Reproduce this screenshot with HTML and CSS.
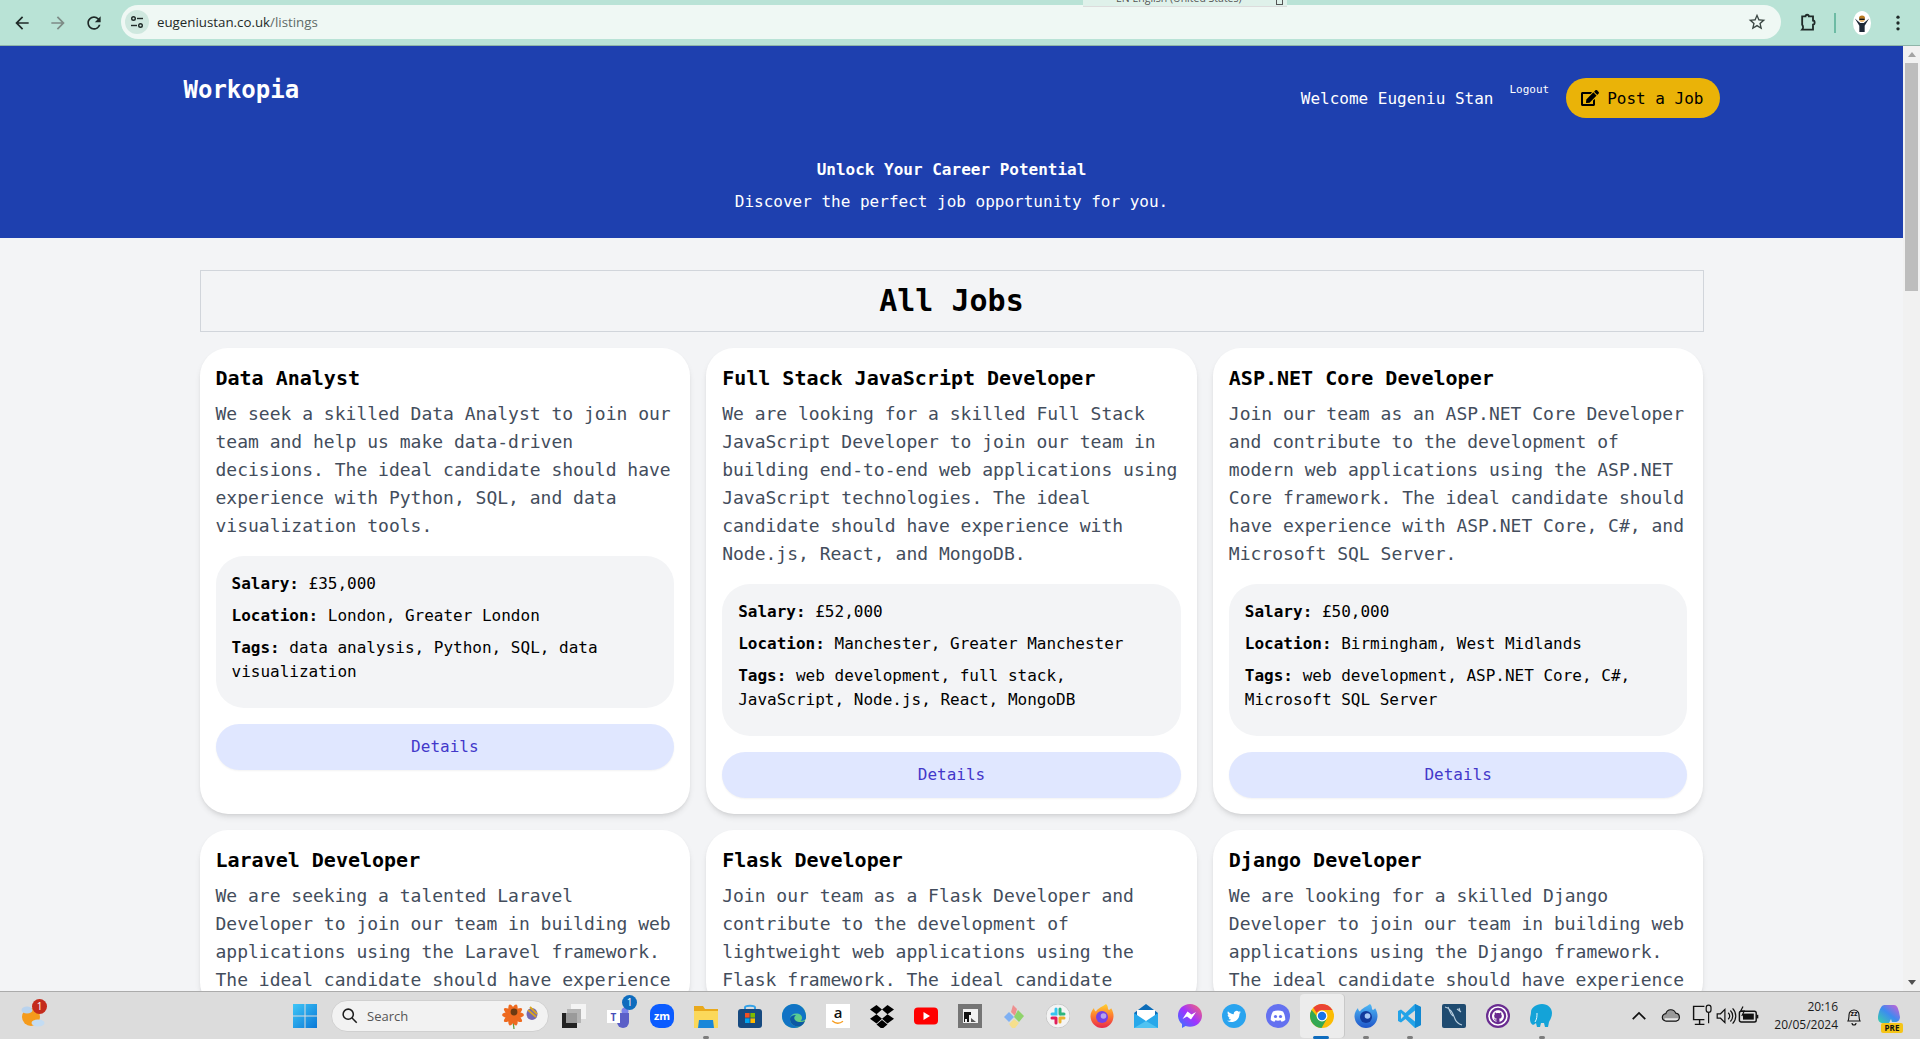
FILE: index.html
```html
<!DOCTYPE html>
<html lang="en">
<head>
    <meta charset="UTF-8">
    <meta name="viewport" content="width=device-width, initial-scale=1.0">
    <title>Workopia</title>
    <link rel="stylesheet" href="styles.css">
</head>
<body>
    <!-- browser toolbar -->
    <div class="toolbar">
        <svg class="tool-btn" viewBox="0 0 24 24"><path fill="#1f2a28" d="M20 11H7.83l5.59-5.59L12 4l-8 8 8 8 1.41-1.41L7.83 13H20v-2z"/></svg>
        <svg class="tool-btn" viewBox="0 0 24 24"><path fill="#7d8b86" d="M4 11h12.17l-5.59-5.59L12 4l8 8-8 8-1.41-1.41L16.17 13H4v-2z"/></svg>
        <svg class="tool-btn" viewBox="0 0 24 24"><path fill="#1f2a28" d="M17.65 6.35A7.958 7.958 0 0012 4c-4.42 0-7.99 3.58-7.99 8s3.57 8 7.99 8c3.73 0 6.84-2.55 7.73-6h-2.08A5.99 5.99 0 0112 18c-3.31 0-6-2.69-6-6s2.69-6 6-6c1.66 0 3.14.69 4.22 1.78L13 11h7V4l-2.35 2.35z"/></svg>
        <div class="omnibox">
            <span class="site-info">
                <svg viewBox="0 0 16 16" width="16" height="16" fill="none" stroke="#1f2a28" stroke-width="1.4"><circle cx="4.5" cy="4.5" r="1.8"/><path d="M8 4.5h6"/><circle cx="11.5" cy="11.5" r="1.8"/><path d="M2 11.5h6"/></svg>
            </span>
            <span class="url">eugeniustan.co.uk<span class="url-path">/listings</span></span>
            <svg class="star" viewBox="0 0 24 24"><path fill="#3a4643" d="M22 9.24l-7.19-.62L12 2 9.19 8.63 2 9.24l5.46 4.73L5.82 21 12 17.27 18.18 21l-1.63-7.03L22 9.24zM12 15.4l-3.76 2.27 1-4.28-3.32-2.88 4.38-.38L12 6.1l1.71 4.04 4.38.38-3.32 2.88 1 4.28L12 15.4z"/></svg>
        </div>
        <svg class="tool-end ext" viewBox="0 0 24 24"><path fill="none" stroke="#1f2a28" stroke-width="2.2" d="M5 4h4c0-2.6 4-2.6 4 0h5v5c2.6 0 2.6 5 0 5v6H5c1.4-1.6 1.4-4.4 0-6z"/></svg>
        <span class="tool-divider"></span>
        <span class="avatar">
            <svg viewBox="0 0 18 22" width="16" height="20"><path d="M1 6l6 5h4l6-5-5 8v7H6v-7z" fill="#1f2937"/><circle cx="9" cy="6.5" r="3.4" fill="#e9b872"/><path d="M5.6 6a3.4 3.4 0 016.8 0z" fill="#b8791f"/><rect x="6" y="6" width="6" height="1.6" fill="#111"/></svg>
        </span>
        <svg class="tool-end menu" viewBox="0 0 24 24"><circle cx="12" cy="5" r="2" fill="#1f2a28"/><circle cx="12" cy="12" r="2" fill="#1f2a28"/><circle cx="12" cy="19" r="2" fill="#1f2a28"/></svg>
    </div>
    <div class="lang-tip"><span>EN English (United States)</span><i></i></div>

    <div class="viewport">
        <div class="page">
            <header class="site-header">
                <nav class="nav">
                    <a class="logo">Workopia</a>
                    <div class="nav-right">
                        <span class="welcome">Welcome Eugeniu Stan</span>
                        <a class="logout">Logout</a>
                        <a class="post-btn">
                            <svg viewBox="0 0 576 512" width="18" height="16"><path fill="#000" d="M402.6 83.2l90.2 90.2c3.8 3.8 3.8 10 0 13.8L274.4 405.6l-92.8 10.3c-12.4 1.4-22.9-9.1-21.5-21.5l10.3-92.8L388.8 83.2c3.8-3.8 10-3.8 13.8 0zm162-22.9l-48.8-48.8c-15.2-15.2-39.9-15.2-55.2 0l-35.4 35.4c-3.8 3.8-3.8 10 0 13.8l90.2 90.2c3.8 3.8 10 3.8 13.8 0l35.4-35.4c15.2-15.3 15.2-40 0-55.2zM384 346.2V448H64V128h229.8c3.2 0 6.2-1.3 8.5-3.5l40-40c7.6-7.6 2.2-20.5-8.5-20.5H48C21.5 64 0 85.5 0 112v352c0 26.5 21.5 48 48 48h352c26.5 0 48-21.5 48-48V306.2c0-10.7-12.9-16-20.5-8.5l-40 40c-2.2 2.3-3.5 5.3-3.5 8.5z"/></svg>
                            Post a Job
                        </a>
                    </div>
                </nav>
                <div class="hero">
                    <h2>Unlock Your Career Potential</h2>
                    <p>Discover the perfect job opportunity for you.</p>
                </div>
            </header>

            <main class="listings">
                <div class="title-box"><h1>All Jobs</h1></div>
                <div class="jobs">
                    <div class="card">
                        <h3>Data Analyst</h3>
                        <p>We seek a skilled Data Analyst to join our team and help us make data-driven decisions. The ideal candidate should have experience with Python, SQL, and data visualization tools.</p>
                        <ul class="facts">
                            <li><b>Salary:</b> £35,000</li>
                            <li><b>Location:</b> London, Greater London</li>
                            <li><b>Tags:</b> data analysis, Python, SQL, data visualization</li>
                        </ul>
                        <a class="details">Details</a>
                    </div>
                    <div class="card">
                        <h3>Full Stack JavaScript Developer</h3>
                        <p>We are looking for a skilled Full Stack JavaScript Developer to join our team in building end-to-end web applications using JavaScript technologies. The ideal candidate should have experience with Node.js, React, and MongoDB.</p>
                        <ul class="facts">
                            <li><b>Salary:</b> £52,000</li>
                            <li><b>Location:</b> Manchester, Greater Manchester</li>
                            <li><b>Tags:</b> web development, full stack, JavaScript, Node.js, React, MongoDB</li>
                        </ul>
                        <a class="details">Details</a>
                    </div>
                    <div class="card">
                        <h3>ASP.NET Core Developer</h3>
                        <p>Join our team as an ASP.NET Core Developer and contribute to the development of modern web applications using the ASP.NET Core framework. The ideal candidate should have experience with ASP.NET Core, C#, and Microsoft SQL Server.</p>
                        <ul class="facts">
                            <li><b>Salary:</b> £50,000</li>
                            <li><b>Location:</b> Birmingham, West Midlands</li>
                            <li><b>Tags:</b> web development, ASP.NET Core, C#, Microsoft SQL Server</li>
                        </ul>
                        <a class="details">Details</a>
                    </div>
                    <div class="card">
                        <h3>Laravel Developer</h3>
                        <p>We are seeking a talented Laravel Developer to join our team in building web applications using the Laravel framework. The ideal candidate should have experience</p>
                    </div>
                    <div class="card">
                        <h3>Flask Developer</h3>
                        <p>Join our team as a Flask Developer and contribute to the development of lightweight web applications using the Flask framework. The ideal candidate</p>
                    </div>
                    <div class="card">
                        <h3>Django Developer</h3>
                        <p>We are looking for a skilled Django Developer to join our team in building web applications using the Django framework. The ideal candidate should have experience</p>
                    </div>
                </div>
            </main>
        </div>
        <div class="scrollbar">
            <span class="arrow-up"></span>
            <span class="thumb"></span>
            <span class="arrow-down"></span>
        </div>
    </div>

    <!-- windows taskbar -->
    <div class="taskbar">
        <div class="weather">
            <svg viewBox="0 0 24 26" width="24" height="26"><circle cx="10" cy="14" r="9" fill="#f59b1c"/><ellipse cx="6" cy="7" rx="5.5" ry="3.6" fill="#b9d3ee"/><ellipse cx="17" cy="20" rx="6.5" ry="3.4" fill="#c3dcf3"/></svg>
            <span class="weather-badge">1</span>
        </div>
        <div class="slot">
            <svg viewBox="0 0 24 24" width="24" height="24"><defs><linearGradient id="winG" x1="0" y1="0" x2="1" y2="1"><stop offset="0" stop-color="#3fc6f7"/><stop offset="1" stop-color="#0a78d7"/></linearGradient></defs><path fill="url(#winG)" d="M0 0h11.5v11.5H0zM12.5 0H24v11.5H12.5zM0 12.5h11.5V24H0zM12.5 12.5H24V24H12.5z"/></svg>
        </div>
        <div class="search">
            <svg viewBox="0 0 20 20" width="17" height="17" fill="none" stroke="#1c1c1c" stroke-width="1.8"><circle cx="8.5" cy="8.5" r="6"/><path d="M13 13l5.5 5.5"/></svg>
            <span>Search</span>
            <svg class="search-art" viewBox="0 0 40 26" width="40" height="26"><path d="M12 18l1 8" stroke="#5d9c3a" stroke-width="1.2"/><g fill="#ee6a1f"><ellipse cx="12" cy="12" rx="11" ry="3.4"/><ellipse cx="12" cy="12" rx="11" ry="3.4" transform="rotate(36 12 12)"/><ellipse cx="12" cy="12" rx="11" ry="3.4" transform="rotate(72 12 12)"/><ellipse cx="12" cy="12" rx="11" ry="3.4" transform="rotate(108 12 12)"/><ellipse cx="12" cy="12" rx="11" ry="3.4" transform="rotate(144 12 12)"/></g><circle cx="13" cy="9" r="3.4" fill="#6b3a12"/><ellipse cx="31" cy="11" rx="5.500" ry="6" fill="#7467b0"/><path d="M27 7l8 7M29 4l7 7" stroke="#d9a520" stroke-width="1.800"/></svg>
        </div>
        <div class="apps">
            <div class="slot"><svg viewBox="0 0 24 24" width="24" height="24"><rect x="9" y="0" width="15" height="15" fill="#f4f4f4"/><rect x="5" y="5" width="14" height="14" fill="#b4b4b4"/><rect y="9" width="15" height="15" fill="#222"/><rect x="4" y="9" width="11" height="10" fill="#9a9a9a"/></svg></div>
            <div class="slot">
                <svg viewBox="0 0 24 24" width="24" height="24"><circle cx="19" cy="7" r="3.5" fill="#7b83eb"/><path d="M11 9h12v9a6 6 0 01-12 0z" fill="#5b5fc7"/><rect x="1" y="6" width="13" height="13" fill="#fff"/><text x="7.5" y="16.5" class="teams-t">T</text></svg>
                <span class="teams-badge">1</span>
            </div>
            <div class="slot"><span class="zoom-ico">zm</span></div>
            <div class="slot running">
                <svg viewBox="0 0 24 24" width="24" height="24"><path d="M0 2h9l2 3h13v19H0z" fill="#e9a91c"/><path d="M0 7h24v17H0z" fill="#fbd85a"/><path d="M5 16h14l1 8H4z" fill="#1a87d9"/></svg>
            </div>
            <div class="slot"><svg viewBox="0 0 24 24" width="24" height="24"><path d="M7 6V3.5C7 1 17 1 17 3.5V6" fill="none" stroke="#35a2e8" stroke-width="2"/><rect y="5" width="24" height="19" rx="3" fill="#174a80"/><rect x="7" y="9" width="4.6" height="4.6" fill="#f25022"/><rect x="12.4" y="9" width="4.6" height="4.6" fill="#7fba00"/><rect x="7" y="14.4" width="4.6" height="4.6" fill="#00a4ef"/><rect x="12.4" y="14.4" width="4.6" height="4.6" fill="#ffb900"/></svg></div>
            <div class="slot"><svg viewBox="0 0 24 24" width="24" height="24"><defs><linearGradient id="edgeG" x1="0" y1="0" x2="1" y2="1"><stop offset="0" stop-color="#34c6d3"/><stop offset="1" stop-color="#7ad25c"/></linearGradient></defs><circle cx="12" cy="12" r="12" fill="url(#edgeG)"/><path d="M12 0C5 0 0 5.500 0 12c0 7 5.500 12 12 12 3 0 5-.7 7-2-5 1.500-11-1-11-7 0-3 2.500-5.500 6-5.500 4 0 6 2 6 4.500 0 1-.5 2-1.500 2.500 3 1 6.500-.500 5.500-5C23 4 18 0 12 0z" fill="#1173c5"/><path d="M8 15c0 6 6 8.500 11 7 1.800-1.100 3.200-2.800 4-5-3 1.500-7 1.500-9.500-.5-2-1.500-1.500-4 .5-5.500-3.500 0-6 1.500-6 4z" fill="#0c59a4"/></svg></div>
            <div class="slot"><span class="amazon-ico"><span>a</span><svg viewBox="0 0 16 6" width="14" height="5"><path d="M1 1c4 3.500 9 3.500 13 .5" fill="none" stroke="#f79c1d" stroke-width="1.6"/></svg></span></div>
            <div class="slot"><svg viewBox="0 0 24 24" width="24" height="24"><path d="M6.500 1L0 5.600l6.500 4.600L12 5.600zM17.500 1L12 5.600l5.500 4.600L24 5.600zM0 14.800l6.500 4.600 5.500-4.600-5.500-4.600zM17.500 10.200L12 14.800l5.500 4.600 6.500-4.600zM6.500 20.600L12 25l5.500-4.400L12 16z" fill="#000"/></svg></div>
            <div class="slot"><svg viewBox="0 0 24 24" width="24" height="24"><rect y="3.500" width="24" height="17" rx="4" fill="#f00"/><path d="M9.500 8l6.500 4-6.500 4z" fill="#fff"/></svg></div>
            <div class="slot"><svg viewBox="0 0 24 24" width="24" height="24"><rect width="24" height="24" fill="#757575"/><rect x="5" y="5" width="15" height="14" fill="#f2f2f2"/><path d="M6 8h7v3h-2v7H9v-3H7v3H6z" fill="#111"/><path d="M13 14l5 4h-5z" fill="#555"/></svg></div>
            <div class="slot"><svg viewBox="0 0 24 24" width="24" height="24"><path d="M7 8l5 5-5 5-5-5z" fill="#7fb0f2"/><path d="M11 1l4 4-2 7-4-4z" fill="#ee8f8f"/><path d="M16 6l6 6-5 6-5-5z" fill="#8fd36b"/><path d="M12 15l5 4-4 5h-3l-3-4z" fill="#f6df8c"/></svg></div>
            <div class="slot"><svg viewBox="0 0 24 24" width="24" height="24"><circle cx="12" cy="12" r="12" fill="#f4f4f4" stroke="#c9c9c9"/><g stroke-width="3" stroke-linecap="round" fill="none"><path d="M10 5v5H6" stroke="#36c5f0"/><path d="M14 5v5" stroke="#2eb67d"/><path d="M18 10h-3" stroke="#2eb67d"/><path d="M18 14h-4" stroke="#ecb22e"/><path d="M14 18v-3" stroke="#ecb22e"/><path d="M10 19v-5" stroke="#e01e5a"/><path d="M6 14h3" stroke="#e01e5a"/></g></svg></div>
            <div class="slot"><svg viewBox="0 0 24 24" width="24" height="24"><defs><linearGradient id="fxG" x1="0.5" y1="0" x2="0.5" y2="1"><stop offset="0" stop-color="#ffd22e"/><stop offset="0.5" stop-color="#ff7b2e"/><stop offset="1" stop-color="#e8274e"/></linearGradient></defs><path d="M16 0c3 3 1 5 3 6 2-1 2-2 2-2 2 3 2.500 6 2.500 8A11.500 12 0 11.500 12C.5 9 2 6 4 4c0 2 1 3 2 3.500C8 4 12 3 16 0z" fill="url(#fxG)"/><circle cx="12" cy="13" r="6" fill="#7542e5"/><circle cx="13.500" cy="12" r="2.800" fill="#b5a2ef"/></svg></div>
            <div class="slot"><svg viewBox="0 0 24 24" width="24" height="24"><path d="M12 0L0 9v15h24V9z" fill="#0c6cb8"/><path d="M3 6h18v10l-9 5-9-5z" fill="#fff"/><path d="M0 9l12 8 12-8v15H0z" fill="#28a8ea"/><path d="M0 24l12-7 12 7z" fill="#50c3f2"/></svg></div>
            <div class="slot"><svg viewBox="0 0 24 24" width="24" height="24"><defs><linearGradient id="msG" x1="0" y1="1" x2="1" y2="0"><stop offset="0" stop-color="#2a7bff"/><stop offset="0.5" stop-color="#a033ff"/><stop offset="1" stop-color="#ff6b68"/></linearGradient></defs><path d="M12 0C5.300 0 0 5 0 11.500c0 3.500 1.500 6.500 4 8.600V24l3.600-2c1.400.500 2.900.800 4.400.800 6.700 0 12-5 12-11.300S18.700 0 12 0z" fill="url(#msG)"/><path d="M4.500 15l5-7.500 4 3 4.500-2.500-5 7.500-4-3z" fill="#fff"/></svg></div>
            <div class="slot"><svg viewBox="0 0 24 24" width="24" height="24"><circle cx="12" cy="12" r="12" fill="#2aa4ef"/><g transform="translate(5 5.500) scale(.58)"><path fill="#fff" d="M23.953 4.570a10 10 0 01-2.825.775 4.958 4.958 0 002.163-2.723c-.951.555-2.005.959-3.127 1.184a4.920 4.920 0 00-8.384 4.482C7.690 8.095 4.067 6.130 1.640 3.162a4.822 4.822 0 00-.666 2.475c0 1.710.870 3.213 2.188 4.096a4.904 4.904 0 01-2.228-.616v.060a4.923 4.923 0 003.946 4.827 4.996 4.996 0 01-2.212.085 4.936 4.936 0 004.604 3.417 9.867 9.867 0 01-6.102 2.105c-.390 0-.779-.023-1.170-.067a13.995 13.995 0 007.557 2.209c9.053 0 13.998-7.496 13.998-13.985 0-.210 0-.420-.015-.630A9.935 9.935 0 0024 4.590z"/></g></svg></div>
            <div class="slot"><svg viewBox="0 0 24 24" width="24" height="24"><circle cx="12" cy="12" r="12" fill="#6471f0"/><path d="M7 7.500c3-1.200 7-1.200 10 0 1.500 2.500 2.300 5.500 2.300 8.500-1.300 1-2.600 1.500-3.800 1.800l-.9-1.500c-1.700.500-3.500.500-5.200 0l-.9 1.500C7.300 17.500 6 17 4.700 16c0-3 .8-6 2.300-8.500z" fill="#fff"/><circle cx="9.500" cy="12.500" r="1.600" fill="#6471f0"/><circle cx="14.500" cy="12.500" r="1.600" fill="#6471f0"/></svg></div>
            <div class="slot active running-blue"><svg viewBox="0 0 24 24" width="24" height="24"><circle cx="12" cy="12" r="12" fill="#fbbc04"/><path d="M12 0a12 12 0 0110.400 6H12a6 6 0 00-5.200 3L3.300 3.800A12 12 0 0112 0z" fill="#ea4335"/><path d="M1.600 6A12 12 0 0011.500 24l5.200-9a6 6 0 01-10-3z" fill="#34a853"/><circle cx="12" cy="12" r="5.400" fill="#fff"/><circle cx="12" cy="12" r="4.200" fill="#1a73e8"/></svg></div>
            <div class="slot running"><svg viewBox="0 0 24 24" width="24" height="24"><defs><linearGradient id="fdG" x1="0.5" y1="0" x2="0.5" y2="1"><stop offset="0" stop-color="#4db8f5"/><stop offset="1" stop-color="#1f55c9"/></linearGradient></defs><path d="M16 0c3 3 1 5 3 6 2-1 2-2 2-2 2 3 2.500 6 2.500 8A11.500 12 0 11.500 12C.5 9 2 6 4 4c0 2 1 3 2 3.500C8 4 12 3 16 0z" fill="url(#fdG)"/><circle cx="12" cy="13" r="6" fill="#123a9c"/><circle cx="13.500" cy="12" r="2.800" fill="#a9c9f5"/></svg></div>
            <div class="slot running"><svg viewBox="0 0 24 24" width="24" height="24"><path d="M17 0l6 3v18l-6 3-9.500-9L3 18.500 0 17V7l3-1.500L7.500 9z" fill="#23a3e8"/><path d="M17 6.500L10 12l7 5.500z" fill="#dcdcdc"/><path d="M3 9v6l3-3z" fill="#dcdcdc"/><path d="M17 0l6 3v18l-6 3z" fill="#1188d2"/></svg></div>
            <div class="slot"><svg viewBox="0 0 24 24" width="24" height="24"><rect width="24" height="24" rx="2" fill="#1f4b70"/><path d="M3 3c6 1 8 7 10 12 1 3 4 5 7 6M6 3c2 4 2 7 5 9M15 5l4 3M17 4l1 3" fill="none" stroke="#b9cfe0" stroke-width="1.100"/></svg></div>
            <div class="slot"><svg viewBox="0 0 24 24" width="24" height="24"><circle cx="12" cy="12" r="12" fill="#6a2c91"/><circle cx="12" cy="12" r="9" fill="none" stroke="#fff" stroke-width="1.600"/><g transform="translate(6 6) scale(.5)"><path fill="#fff" d="M12 .297c-6.630 0-12 5.373-12 12 0 5.303 3.438 9.800 8.205 11.385.600.113.820-.258.820-.577 0-.285-.010-1.040-.015-2.040-3.338.724-4.042-1.610-4.042-1.610C4.422 18.070 3.633 17.700 3.633 17.700c-1.087-.744.084-.729.084-.729 1.205.084 1.838 1.236 1.838 1.236 1.070 1.835 2.809 1.305 3.495.998.108-.776.417-1.305.760-1.605-2.665-.300-5.466-1.332-5.466-5.930 0-1.310.465-2.380 1.235-3.220-.135-.303-.540-1.523.105-3.176 0 0 1.005-.322 3.300 1.230.960-.267 1.980-.399 3-.405 1.020.006 2.040.138 3 .405 2.280-1.552 3.285-1.230 3.285-1.230.645 1.653.240 2.873.120 3.176.765.840 1.230 1.910 1.230 3.220 0 4.610-2.805 5.625-5.475 5.920.420.360.810 1.096.810 2.220 0 1.606-.015 2.896-.015 3.286 0 .315.210.690.825.570C20.565 22.092 24 17.592 24 12.297c0-6.627-5.373-12-12-12"/></g></svg></div>
            <div class="slot running"><svg viewBox="0 0 24 24" width="24" height="24"><path d="M12 0c6 0 10 4 10 9 0 4-2 7-3 9l-1 5h-3l-1-4h-3l-1 4H7l-1-4c-1 1-3 2-3 2-2-1-3-3-3-6 0-3 1-4 1-7C1 4 6 0 12 0z" fill="#14a3d8"/><path d="M7 9c0 3 0 6-2 9" fill="none" stroke="#fff" stroke-width=".9"/></svg></div>
        </div>
        <div class="tray">
            <svg class="tray-ico wide" viewBox="0 0 16 16"><path d="M3 10.500L8 5.500l5 5" fill="none" stroke="#111" stroke-width="1.400"/></svg>
            <svg class="tray-ico wide cloud" viewBox="0 0 20 16"><path d="M5 14a4 4 0 01-.5-8A5.500 5.500 0 0115 5.500 4.300 4.300 0 0115.500 14z" fill="#9a9a9a"/><path d="M3 11h15v3H4z" fill="#e8e8e8"/><path d="M5 14a4 4 0 01-.5-8A5.500 5.500 0 0115 5.500 4.300 4.300 0 0115.500 14z" fill="none" stroke="#111" stroke-width="1.200"/></svg>
            <svg class="tray-ico net" viewBox="0 0 20 20"><path d="M12 2H3v11h9M8 13v4M4 17h8" fill="none" stroke="#111" stroke-width="1.200"/><rect x="13.500" y="1" width="4" height="6" rx="2" fill="none" stroke="#111"/><path d="M15.500 7v9" stroke="#111"/></svg>
            <svg class="tray-ico snd" viewBox="0 0 20 20"><path d="M2 8v4h3l4 4V4L5 8z" fill="none" stroke="#111" stroke-width="1.100"/><path d="M12 7a4 4 0 010 6M14 5a7 7 0 010 10M16 3a10 10 0 010 14" fill="none" stroke="#111" stroke-width="1.100"/></svg>
            <svg class="tray-ico" viewBox="0 0 20 20"><rect x="2" y="6" width="14" height="9" rx="1.500" fill="none" stroke="#111" stroke-width="1.200"/><rect x="5" y="8" width="9" height="5" fill="#111"/><path d="M17 9v3" stroke="#111" stroke-width="1.500"/><path d="M5 2L3 6h3L4 10" fill="none" stroke="#111"/></svg>
            <div class="clock"><div>20:16</div><div>20/05/2024</div></div>
            <svg class="bell" viewBox="0 0 20 22" width="20" height="22"><path d="M4 16c1-2 1-3 1-6a5 5 0 0110 0c0 3 0 4 1 6zM8 18a2 2 0 004 0" fill="none" stroke="#111" stroke-width="1.100"/><text x="10" y="11" class="bell-z">zz</text></svg>
            <div class="copilot">
                <svg viewBox="0 0 24 24" width="24" height="24"><defs><linearGradient id="coG" x1="0" y1="1" x2="1" y2="0"><stop offset="0" stop-color="#39d2a8"/><stop offset="0.5" stop-color="#3d8bf0"/><stop offset="1" stop-color="#d65cd2"/></linearGradient></defs><path d="M8 1h9c3 0 4 3 5 7l1 5c0 3-2 5-5 5h-3l-1-3-2 4H6c-3 0-5-2-5-5 0-4 2-10 4-12 1-1 2-1 3-1z" fill="url(#coG)"/></svg>
                <span class="pre">PRE</span>
            </div>
        </div>
    </div>
</body>
</html>
```

FILE: styles.css
```css
* {
    box-sizing: border-box;
}
body {
    margin: 0;
    height: 100vh;
    overflow: hidden;
    display: flex;
    flex-direction: column;
    font-family: 'DejaVu Sans Mono', 'Liberation Mono', monospace;
    background: #f3f4f6;
}
h1, h2, h3, p, ul {
    margin: 0;
    padding: 0;
}

/* browser toolbar */
.toolbar {
    height: 46px;
    flex: none;
    display: flex;
    align-items: center;
    background: #b9e3d6;
    border-bottom: 1px solid #8fb5a9;
    padding-left: 12px;
}
.tool-btn {
    width: 20px;
    height: 20px;
    margin-right: 16px;
}
.omnibox {
    width: 1660px;
    height: 34px;
    margin: -1px 0 0 1px;
    border-radius: 17px;
    background: #eff8f4;
    display: flex;
    align-items: center;
    padding-left: 4px;
}
.site-info {
    width: 24px;
    height: 24px;
    border-radius: 50%;
    background: #cfe8df;
    display: flex;
    align-items: center;
    justify-content: center;
    margin-right: 8px;
}
.url {
    font-family: 'Open Sans', sans-serif;
    font-size: 13.3px;
    color: #1f2a28;
}
.url-path {
    color: #5f6b68;
}
.star {
    width: 20px;
    height: 20px;
    margin-left: auto;
    margin-right: 14px;
}
.tool-end {
    width: 20px;
    height: 20px;
}
.ext {
    margin-left: 17px;
}
.tool-divider {
    width: 2px;
    height: 20px;
    background: #6dbba4;
    margin-left: 16px;
}
.avatar {
    width: 18px;
    height: 24px;
    border-radius: 50%;
    background: #fff;
    margin-left: 17px;
    display: flex;
    align-items: center;
    justify-content: center;
}
.menu {
    margin-left: 17px;
}
.lang-tip {
    position: absolute;
    left: 1083px;
    top: 0;
    width: 204px;
    height: 7px;
    overflow: hidden;
    background: #dff1ea;
    border-bottom: 1px solid #dcdcdc;
    display: flex;
    justify-content: space-between;
    padding: 0 4px 0 33px;
}
.lang-tip span {
    font-family: 'Open Sans', sans-serif;
    font-size: 10.5px;
    line-height: 11px;
    margin-top: -7px;
    color: #555;
    white-space: nowrap;
}
.lang-tip i {
    width: 7px;
    height: 5px;
    border: 1px solid #555;
    border-top: none;
}

/* page area */
.viewport {
    flex: 1;
    min-height: 0;
    display: flex;
}
.page {
    flex: 1;
    min-width: 0;
    overflow: hidden;
}
.scrollbar {
    width: 17px;
    flex: none;
    background: #f1f1f1;
    display: flex;
    flex-direction: column;
    align-items: center;
}
.thumb {
    width: 13px;
    height: 228px;
    background: #bdbdbd;
    margin-top: 6px;
}
.arrow-up {
    margin-top: 6px;
    border: 4px solid transparent;
    border-top: none;
    border-bottom: 5px solid #a3a3a3;
}
.arrow-down {
    margin-top: auto;
    margin-bottom: 6px;
    border: 4px solid transparent;
    border-bottom: none;
    border-top: 5px solid #505050;
}

.site-header {
    height: 192px;
    background: #1e40af;
    color: #fff;
}
.nav {
    max-width: 1536px;
    margin: 0 auto;
    display: flex;
    justify-content: space-between;
    align-items: flex-start;
    padding-top: 28px;
}
.logo {
    font-size: 24px;
    line-height: 32px;
    font-weight: 700;
}
.nav-right {
    display: flex;
    align-items: center;
    margin-top: 4px;
}
.welcome {
    font-size: 16px;
    margin-right: 16px;
}
.logout {
    font-size: 11px;
    line-height: 16px;
    align-self: flex-start;
    margin: 4px 17px 0 0;
}
.post-btn {
    height: 40px;
    padding: 0 16px 0 15px;
    display: flex;
    align-items: center;
    gap: 8px;
    border-radius: 20px;
    background: #eab308;
    color: #000;
    font-size: 16px;
}
.hero {
    text-align: center;
    font-size: 16px;
    line-height: 24px;
    padding-top: 40px;
}
.hero h2 {
    font-size: 16px;
    margin-bottom: 8px;
}

.listings {
    max-width: 1536px;
    margin: 32px auto 0;
    padding: 0 16px;
}
.title-box {
    border: 1px solid #d1d5db;
    padding: 12px;
    margin-bottom: 16px;
    text-align: center;
}
.title-box h1 {
    font-size: 30px;
    line-height: 36px;
    color: #000;
}
.jobs {
    display: grid;
    grid-template-columns: repeat(3, 1fr);
    gap: 16px;
}
.card {
    background: #fff;
    border-radius: 28px;
    padding: 16px;
    box-shadow: 0 4px 6px -1px rgba(0, 0, 0, 0.1), 0 2px 4px -2px rgba(0, 0, 0, 0.1);
}
.card h3 {
    font-size: 20px;
    line-height: 28px;
    color: #000;
    margin-bottom: 8px;
}
.card p {
    font-size: 18px;
    line-height: 28px;
    color: #434d5c;
}
.facts {
    list-style: none;
    margin-top: 16px;
    padding: 16px;
    background: #f3f4f6;
    border-radius: 28px;
    font-size: 16px;
    line-height: 24px;
    color: #000;
}
.facts li {
    margin-bottom: 8px;
}
.details {
    display: block;
    margin-top: 16px;
    padding: 11px;
    text-align: center;
    font-size: 16px;
    line-height: 24px;
    color: #4338ca;
    background: #e0e7ff;
    border-radius: 23px;
    box-shadow: 0 1px 2px rgba(0, 0, 0, 0.05);
}

/* taskbar */
.taskbar {
    height: 48px;
    flex: none;
    display: flex;
    align-items: center;
    background: #dcdcdc;
    border-top: 1px solid #ababab;
    font-family: 'Open Sans', sans-serif;
    color: #222;
}
.weather {
    width: 283px;
    padding-left: 21px;
    position: relative;
    display: flex;
}
.weather-badge {
    position: absolute;
    left: 32px;
    top: -4px;
    width: 15px;
    height: 15px;
    border-radius: 50%;
    background: #c42b1c;
    color: #fff;
    font-size: 10px;
    line-height: 15px;
    text-align: center;
}
.slot {
    width: 44px;
    height: 44px;
    flex: none;
    display: flex;
    align-items: center;
    justify-content: center;
    position: relative;
}
.search {
    width: 218px;
    height: 32px;
    margin: 0 3px 0 4px;
    border-radius: 16px;
    background: #f2f2f2;
    border: 1px solid #d0d0d0;
    display: flex;
    align-items: center;
    padding-left: 9px;
    font-size: 13px;
    color: #555;
    gap: 9px;
}
.search-art {
    margin-left: auto;
    margin-right: 7px;
}
.apps {
    display: flex;
}
.running::after, .running-blue::after {
    content: "";
    position: absolute;
    bottom: -1px;
    left: 19px;
    width: 6px;
    height: 3px;
    border-radius: 2px;
    background: #7d7d7d;
}
.running-blue::after {
    left: 13px;
    width: 16px;
    background: #0f6cbd;
}
.active {
    background: #ececec;
    border-radius: 4px;
    box-shadow: 1px 0 0 #c8c8c8;
}
.teams-t {
    font-family: 'Open Sans', sans-serif;
    font-size: 10px;
    font-weight: 700;
    fill: #464eb8;
    text-anchor: middle;
}
.teams-badge {
    position: absolute;
    right: 3px;
    top: 1px;
    width: 15px;
    height: 15px;
    border-radius: 50%;
    background: #0f6cbd;
    color: #fff;
    font-size: 10px;
    line-height: 15px;
    text-align: center;
}
.zoom-ico {
    width: 24px;
    height: 24px;
    border-radius: 9px;
    background: #0b5cff;
    color: #fff;
    font-size: 11px;
    font-weight: 700;
    line-height: 24px;
    text-align: center;
}
.amazon-ico {
    width: 24px;
    height: 24px;
    background: #fff;
    display: flex;
    flex-direction: column;
    align-items: center;
    color: #111;
    font-size: 15px;
    font-weight: 600;
    line-height: 17px;
}
.amazon-ico svg {
    margin-top: -1px;
}
.tray {
    margin-left: 59px;
    width: 278px;
    display: flex;
    align-items: center;
}
.tray-ico {
    width: 24px;
    height: 24px;
    flex: none;
}
.tray-ico.wide {
    width: 32px;
    height: 20px;
}
.tray-ico.cloud {
    height: 15px;
}
.net {
    margin-left: 3px;
}
.snd {
    margin-left: 1px;
    width: 22px;
}
.clock {
    flex: 1;
    text-align: right;
    font-size: 12px;
    line-height: 18px;
    color: #1a1a1a;
}
.bell {
    margin-left: 6px;
    flex: none;
}
.bell-z {
    font-size: 7px;
    font-weight: 700;
    fill: #111;
    text-anchor: middle;
}
.copilot {
    width: 24px;
    margin-left: 13px;
    flex: none;
    position: relative;
    display: flex;
}
.pre {
    position: absolute;
    left: 4px;
    bottom: -5px;
    width: 22px;
    height: 10px;
    border-radius: 2px;
    background: #f5c518;
    color: #111;
    font-size: 8px;
    font-weight: 700;
    line-height: 10px;
    text-align: center;
}
```
